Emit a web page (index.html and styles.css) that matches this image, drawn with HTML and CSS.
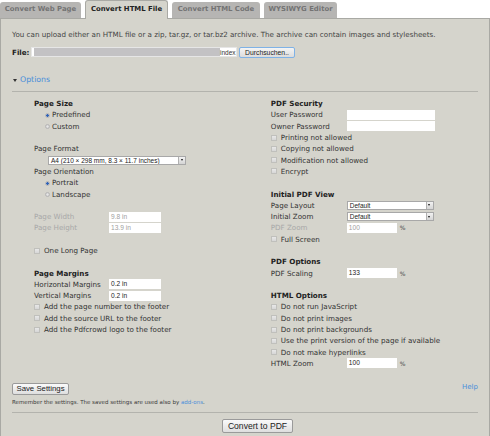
FILE: index.html
```html
<!DOCTYPE html>
<html>
<head>
<meta charset="utf-8">
<link rel="stylesheet" href="styles.css">
</head>
<body>
<div class="tabs">
  <div class="tab t1">Convert Web Page</div>
  <div class="tab t2 active">Convert HTML File</div>
  <div class="tab t3">Convert HTML Code</div>
  <div class="tab t4">WYSIWYG Editor</div>
</div>
<div class="panel">
  <p class="intro">You can upload either an HTML file or a zip, tar.gz, or tar.bz2 archive. The archive can contain images and stylesheets.</p>
  <div class="file-row">
    <span class="file-label">File:</span>
    <div class="file-input"><span class="redact"></span><span class="fname">index</span></div>
    <button class="browse">Durchsuchen..</button>
  </div>
  <div class="options-toggle"><span class="tri"></span>Options</div>
  <div class="sep"></div>
  <div class="cols">
    <div class="col left">
      <div class="row head">Page Size</div>
      <div class="row radio-row"><span class="radio on"></span>Predefined</div>
      <div class="row radio-row"><span class="radio"></span>Custom</div>
      <div class="row"></div>
      <div class="row">Page Format</div>
      <div class="row select-row"><div class="select wide"><span class="sel-text">A4 (210 × 298 mm, 8.3 × 11.7 inches)</span><span class="arrow"></span></div></div>
      <div class="row">Page Orientation</div>
      <div class="row radio-row"><span class="radio on"></span>Portrait</div>
      <div class="row radio-row"><span class="radio"></span>Landscape</div>
      <div class="row"></div>
      <div class="row disabled"><span class="label">Page Width</span><span class="input w52 dim">9.8 in</span></div>
      <div class="row disabled"><span class="label">Page Height</span><span class="input w52 dim">13.9 in</span></div>
      <div class="row"></div>
      <div class="row check-row"><span class="check"></span>One Long Page</div>
      <div class="row"></div>
      <div class="row head">Page Margins</div>
      <div class="row"><span class="label">Horizontal Margins</span><span class="input w52">0.2 in</span></div>
      <div class="row"><span class="label">Vertical Margins</span><span class="input w52">0.2 in</span></div>
      <div class="row check-row"><span class="check"></span>Add the page number to the footer</div>
      <div class="row check-row"><span class="check"></span>Add the source URL to the footer</div>
      <div class="row check-row"><span class="check"></span>Add the Pdfcrowd logo to the footer</div>
    </div>
    <div class="col right">
      <div class="row head">PDF Security</div>
      <div class="row"><span class="label">User Password</span><span class="input w88"></span></div>
      <div class="row"><span class="label">Owner Password</span><span class="input w88"></span></div>
      <div class="row check-row"><span class="check"></span>Printing not allowed</div>
      <div class="row check-row"><span class="check"></span>Copying not allowed</div>
      <div class="row check-row"><span class="check"></span>Modification not allowed</div>
      <div class="row check-row"><span class="check"></span>Encrypt</div>
      <div class="row"></div>
      <div class="row head">Initial PDF View</div>
      <div class="row"><span class="label">Page Layout</span><div class="select narrow"><span class="sel-text">Default</span><span class="arrow"></span></div></div>
      <div class="row"><span class="label">Initial Zoom</span><div class="select narrow"><span class="sel-text">Default</span><span class="arrow"></span></div></div>
      <div class="row disabled"><span class="label">PDF Zoom</span><span class="input w50 dim">100</span><span class="pct">%</span></div>
      <div class="row check-row"><span class="check"></span>Full Screen</div>
      <div class="row"></div>
      <div class="row head">PDF Options</div>
      <div class="row"><span class="label">PDF Scaling</span><span class="input w50">133</span><span class="pct">%</span></div>
      <div class="row"></div>
      <div class="row head">HTML Options</div>
      <div class="row check-row"><span class="check"></span>Do not run JavaScript</div>
      <div class="row check-row"><span class="check"></span>Do not print images</div>
      <div class="row check-row"><span class="check"></span>Do not print backgrounds</div>
      <div class="row check-row"><span class="check"></span>Use the print version of the page if available</div>
      <div class="row check-row"><span class="check"></span>Do not make hyperlinks</div>
      <div class="row"><span class="label">HTML Zoom</span><span class="input w50">100</span><span class="pct">%</span></div>
    </div>
  </div>
  <div class="footer-row">
    <button class="btn save">Save Settings</button>
    <a class="help">Help</a>
  </div>
  <p class="remember">Remember the settings. The saved settings are used also by <a class="link">add-ons</a>.</p>
  <div class="sep bottom"></div>
  <div class="convert-row"><button class="btn convert">Convert to PDF</button></div>
</div>
</body>
</html>
```
FILE: styles.css
```css
html, body {
  margin: 0;
  padding: 0;
  background: #ffffff;
}
body {
  width: 490px;
  height: 436px;
  overflow: hidden;
  font-family: "DejaVu Sans", sans-serif;
  font-size: 7.15px;
  color: #333333;
}
.tabs {
  display: flex;
  align-items: flex-end;
  gap: 4px;
  height: 18px;
  border-bottom: 1px solid #a9a9a4;
  background: #ffffff;
}
.tab {
  box-sizing: border-box;
  height: 16px;
  line-height: 15px;
  font-weight: bold;
  font-size: 6.9px;
  color: #737373;
  background: #b6b5b3;
  border-radius: 3px 3px 0 0;
  text-align: center;
  white-space: nowrap;
}
.t1 { width: 81px; }
.t2 { width: 83px; }
.t3 { width: 88px; }
.t4 { width: 73px; }
.tab.active {
  height: 19px;
  margin-bottom: -1px;
  line-height: 17px;
  background: #d5d4cc;
  color: #222222;
  border: 1px solid #a9a9a4;
  border-bottom: none;
}
.panel {
  background: #d5d4cc;
  border-left: 1px solid #a9a9a4;
  border-right: 1px solid #a9a9a4;
  height: 417px;
  padding: 0 11px 0 11px;
  box-sizing: border-box;
}
.intro {
  margin: 0;
  padding-top: 11px;
  line-height: 10px;
  white-space: nowrap;
  color: #444444;
}
.file-row {
  display: flex;
  align-items: center;
  height: 12px;
  margin-top: 6px;
}
.file-label {
  font-weight: bold;
  width: 19px;
  color: #222;
}
.file-input {
  width: 206px;
  height: 10px;
  background: #ffffff;
  display: flex;
  align-items: center;
  overflow: hidden;
  box-sizing: border-box;
  border: 1px solid #e6e6e6;
}
.redact {
  width: 186px;
  height: 8px;
  margin-left: 2px;
  background: #c3c2c4;
}
.fname {
  font-family: "Liberation Sans", sans-serif;
  font-size: 6.5px;
  color: #333;
  margin-left: 0px;
}
.browse {
  margin: 0 0 0 2px;
  width: 56px;
  height: 11px;
  padding: 0;
  font-family: "Liberation Sans", sans-serif;
  font-size: 6.8px;
  color: #222;
  background: linear-gradient(#f4f4f4, #dcdcdc);
  border: 1px solid #7fb2e6;
  border-radius: 2px;
  line-height: 9px;
}
.options-toggle {
  margin-top: 17px;
  height: 10px;
  line-height: 10px;
  display: flex;
  align-items: center;
  font-size: 7.8px;
  color: #4a8fda;
  padding-left: 1px;
}
.tri {
  width: 0;
  height: 0;
  border-left: 2.5px solid transparent;
  border-right: 2.5px solid transparent;
  border-top: 3.5px solid #333;
  margin-right: 3px;
}
.sep {
  height: 0;
  border-top: 1px solid #b3b3ad;
  margin-top: 6px;
}
.cols {
  display: flex;
  padding-top: 6px;
  padding-left: 22px;
}
.col.left { width: 240px; }
.col.right { width: 210px; }
.row {
  height: 11.3px;
  display: flex;
  align-items: center;
  white-space: nowrap;
}
.head {
  font-weight: bold;
  color: #222;
}
.label {
  display: inline-block;
}
.left .label { width: 75px; }
.right .label { width: 76px; }
.disabled { color: #a8a8a8; }
.radio-row { padding-left: 11px; }
.radio {
  display: inline-block;
  box-sizing: border-box;
  width: 5px;
  height: 5px;
  border-radius: 50%;
  background: radial-gradient(#e6e6e6, #cfcfcf);
  border: 0.5px solid #b6b6b6;
  margin-right: 2px;
  margin-top: 1px;
}
.radio.on {
  background: radial-gradient(circle, #2f63b8 0, #2f63b8 1.2px, #dcdcdc 1.6px);
}
.check {
  display: inline-block;
  box-sizing: border-box;
  width: 6px;
  height: 6px;
  background: linear-gradient(#e8e8e8, #d6d6d6);
  border: 1px solid #c0c0bc;
  margin-right: 4px;
}
.select-row { padding-left: 14px; }
.select {
  display: flex;
  box-sizing: border-box;
  height: 9px;
  background: #ffffff;
  border: 1px solid #a8a8a8;
  align-items: center;
  font-family: "Liberation Sans", sans-serif;
  font-size: 6.5px;
  color: #222;
}
.select.wide { width: 138px; }
.select.narrow { width: 87px; }
.sel-text {
  flex: 1;
  padding-left: 2px;
  overflow: hidden;
}
.arrow {
  box-sizing: border-box;
  width: 7px;
  height: 7px;
  background: linear-gradient(#f2f2f2, #d4d4d4);
  border-left: 1px solid #b0b0b0;
  position: relative;
}
.arrow::after {
  content: "";
  position: absolute;
  left: 1.5px;
  top: 2.5px;
  border-left: 1.5px solid transparent;
  border-right: 1.5px solid transparent;
  border-top: 2px solid #111;
}
.input {
  display: inline-block;
  box-sizing: border-box;
  height: 10px;
  line-height: 10px;
  background: #ffffff;
  font-family: "Liberation Sans", sans-serif;
  font-size: 6.6px;
  color: #222;
  padding-left: 2px;
}
.input.dim { color: #a0a0a0; }
.w52 { width: 52px; }
.w50 { width: 50px; }
.w88 { width: 88px; }
.pct {
  margin-left: 3px;
  font-size: 6px;
  color: #444;
}
.footer-row {
  display: flex;
  justify-content: space-between;
  margin-top: 13.5px;
  height: 12px;
}
.btn {
  box-sizing: border-box;
  padding: 0;
  font-family: "Liberation Sans", sans-serif;
  color: #222;
  background: linear-gradient(#fafafa, #dedede);
  border: 1px solid #9a9a9a;
  border-radius: 2px;
}
.save {
  width: 57px;
  height: 12px;
  font-size: 7.8px;
  line-height: 10px;
}
.help {
  color: #4a8fda;
  font-size: 7px;
  line-height: 9px;
  margin-right: 0px;
}
.remember {
  margin: 3px 0 0 0;
  line-height: 8px;
  font-size: 5.5px;
  color: #3a3a3a;
  white-space: nowrap;
}
.link { color: #4a8fda; }
.sep.bottom { margin-top: 6px; }
.convert-row {
  padding-left: 210px;
  margin-top: 6px;
}
.convert {
  width: 71px;
  height: 14px;
  font-size: 8.6px;
  line-height: 12px;
}
```
